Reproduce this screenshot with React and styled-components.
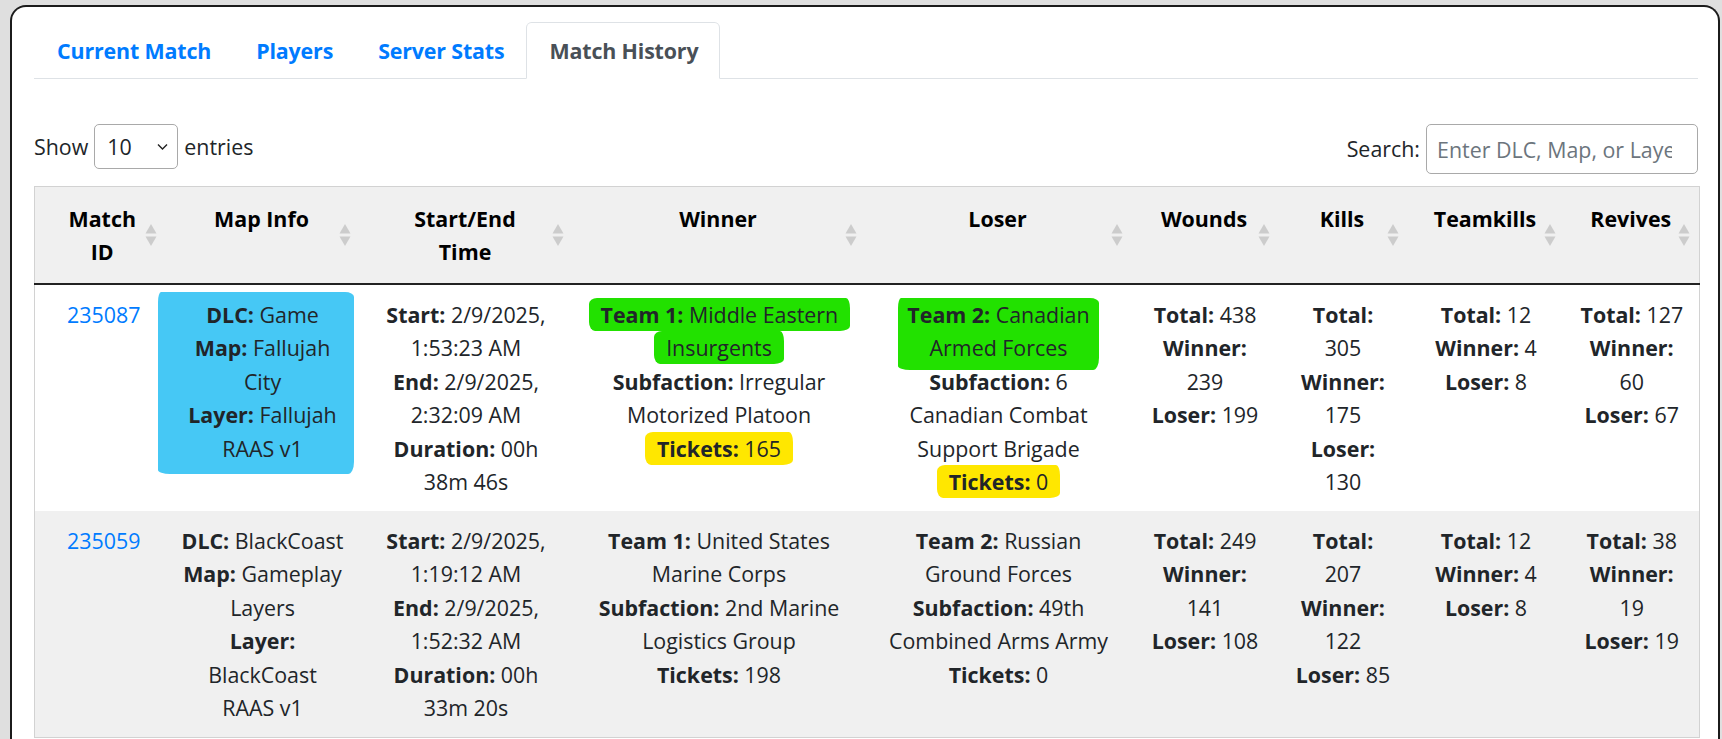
import React from 'react';
import styled, { createGlobalStyle, css } from 'styled-components';

const GlobalStyle = createGlobalStyle`
  * {
    box-sizing: border-box;
  }

  html,
  body {
    margin: 0;
    padding: 0;
    overflow: hidden;
    background: #dfdfdf;
  }

  body {
    font-family: 'Open Sans', 'Liberation Sans', sans-serif;
    font-size: 21.4px;
    line-height: 33.5px;
    color: #212529;
  }
`;

const Panel = styled.main`
  min-height: calc(100vh - 5px);
  margin: 5px 2px 0 10px;
  padding: 14.5px 20px 0 22px;
  background: #fff;
  border: 2px solid #1b1b1b;
  border-bottom: none;
  border-radius: 16px 16px 0 0;
`;

const TabList = styled.nav`
  display: flex;
  border-bottom: 1px solid #dee2e6;
`;

const Tab = styled.a`
  display: block;
  margin-bottom: -1px;
  padding: 11px 21px 11px 22px;
  border: 1px solid transparent;
  border-radius: 5.6px 5.6px 0 0;
  font-weight: 700;
  letter-spacing: -0.15px;
  color: #007bff;
  text-decoration: none;
  cursor: pointer;

  ${(props) =>
    props.$active &&
    css`
      color: #495057;
      background: #fff;
      border-color: #dee2e6 #dee2e6 #fff;
    `}
`;

const Toolbar = styled.div`
  display: flex;
  justify-content: space-between;
  align-items: flex-start;
  margin: 45px 0 12px;
  height: 50px;
`;

const LengthControl = styled.label`
  display: flex;
  align-items: center;
  gap: 6px;
  height: 45px;
`;

const SelectWrap = styled.span`
  position: relative;
  display: inline-flex;
`;

const Select = styled.select`
  appearance: none;
  width: 84px;
  height: 45px;
  padding: 0 30px 0 12px;
  font: inherit;
  color: #212529;
  background: #fff;
  border: 1px solid #a9a9a9;
  border-radius: 5px;
`;

const Chevron = styled.svg`
  position: absolute;
  right: 10px;
  top: 50%;
  transform: translateY(-50%);
  pointer-events: none;
`;

const SearchControl = styled.label`
  display: flex;
  align-items: center;
  gap: 6px;
  height: 50px;
`;

const SearchInput = styled.input`
  width: 272px;
  height: 50px;
  padding: 0 6px 0 10px;
  font: inherit;
  color: #212529;
  border: 1px solid #a9a9a9;
  border-radius: 5px;

  &::placeholder {
    color: #6c757d;
  }
`;

const Table = styled.table`
  width: 100%;
  table-layout: fixed;
  border-collapse: collapse;
  border: 1px solid #d2d2d2;
`;

const Th = styled.th`
  position: relative;
  width: ${(props) => props.$width}px;
  padding: 14.5px 22px 14.5px ${(props) => (props.$lead ? 26 : 20)}px;
  background: #f0f0f0;
  border-bottom: 2px solid #222;
  font-weight: 700;
  color: #000;
  text-align: center;
  vertical-align: top;
`;

const SortIcon = styled.svg`
  position: absolute;
  right: 9px;
  top: 50%;
  transform: translateY(-50%);
`;

const Row = styled.tr`
  background: ${(props) => (props.$striped ? '#f0f0f0' : '#fff')};
`;

const Td = styled.td`
  padding: 12.5px 16px 12.5px ${(props) => (props.$lead ? 23 : 16)}px;
  text-align: center;
  vertical-align: top;
  white-space: nowrap;
`;

const MatchLink = styled.a`
  color: #007bff;
  text-decoration: none;
`;

const Label = styled.b`
  font-weight: 700;
`;

const tones = {
  blue: '#46c8f5',
  green: '#22e100',
  yellow: '#ffe700',
};

// hand-drawn marker strokes over the cell text
const Marker = styled.span`
  background: ${(props) => tones[props.$tone]};

  ${(props) =>
    props.$spread
      ? css`
          display: inline-block;
          padding: ${props.$spread.map((v) => `${v}px`).join(' ')};
          margin: ${props.$spread.map((v) => `${-v}px`).join(' ')};
          border-radius: 3px 9px 6px 12px / 10px 5px 12px 4px;
        `
      : css`
          padding: 2px 12px;
          border-radius: 8px 4px 10px 6px / 6px 10px 5px 9px;
          -webkit-box-decoration-break: clone;
          box-decoration-break: clone;
        `}
`;

const columns = [
  { label: ['Match', 'ID'], width: 131 },
  { label: ['Map Info'], width: 194 },
  { label: ['Start/End', 'Time'], width: 213 },
  { label: ['Winner'], width: 293 },
  { label: ['Loser'], width: 266 },
  { label: ['Wounds'], width: 147 },
  { label: ['Kills'], width: 129 },
  { label: ['Teamkills'], width: 157 },
  { label: ['Revives'], width: 135 },
];

const matches = [
  {
    id: '235087',
    cells: [
      [
        {
          tone: 'blue',
          spread: [6, 17, 9, 30],
          lines: ['**DLC:** Game', '**Map:** Fallujah', 'City', '**Layer:** Fallujah', 'RAAS v1'],
        },
      ],
      ['**Start:** 2/9/2025,', '1:53:23 AM', '**End:** 2/9/2025,', '2:32:09 AM', '**Duration:** 00h', '38m 46s'],
      [
        { tone: 'green', lines: ['**Team 1:** Middle Eastern', 'Insurgents'] },
        { lines: ['**Subfaction:** Irregular', 'Motorized Platoon'] },
        { tone: 'yellow', lines: ['**Tickets:** 165'] },
      ],
      [
        { tone: 'green', spread: [0, 9, 5, 9], lines: ['**Team 2:** Canadian', 'Armed Forces'] },
        { lines: ['**Subfaction:** 6', 'Canadian Combat', 'Support Brigade'] },
        { tone: 'yellow', lines: ['**Tickets:** 0'] },
      ],
      ['**Total:** 438', '**Winner:**', '239', '**Loser:** 199'],
      ['**Total:**', '305', '**Winner:**', '175', '**Loser:**', '130'],
      ['**Total:** 12', '**Winner:** 4', '**Loser:** 8'],
      ['**Total:** 127', '**Winner:**', '60', '**Loser:** 67'],
    ],
  },
  {
    id: '235059',
    cells: [
      ['**DLC:** BlackCoast', '**Map:** Gameplay', 'Layers', '**Layer:**', 'BlackCoast', 'RAAS v1'],
      ['**Start:** 2/9/2025,', '1:19:12 AM', '**End:** 2/9/2025,', '1:52:32 AM', '**Duration:** 00h', '33m 20s'],
      ['**Team 1:** United States', 'Marine Corps', '**Subfaction:** 2nd Marine', 'Logistics Group', '**Tickets:** 198'],
      ['**Team 2:** Russian', 'Ground Forces', '**Subfaction:** 49th', 'Combined Arms Army', '**Tickets:** 0'],
      ['**Total:** 249', '**Winner:**', '141', '**Loser:** 108'],
      ['**Total:**', '207', '**Winner:**', '122', '**Loser:** 85'],
      ['**Total:** 12', '**Winner:** 4', '**Loser:** 8'],
      ['**Total:** 38', '**Winner:**', '19', '**Loser:** 19'],
    ],
  },
];

// "**Label:** value" -> bold label followed by plain text
const renderLine = (text) =>
  text.split('**').map((part, i) => (i % 2 ? <Label key={i}>{part}</Label> : part));

const withBreaks = (items, render) =>
  items.map((item, i) => (
    <React.Fragment key={i}>
      {i > 0 && <br />}
      {render(item)}
    </React.Fragment>
  ));

const toGroups = (cell) => (typeof cell[0] === 'string' ? [{ lines: cell }] : cell);

const CellContent = ({ cell }) =>
  withBreaks(toGroups(cell), (group) => {
    const body = withBreaks(group.lines, renderLine);
    return group.tone ? (
      <Marker $tone={group.tone} $spread={group.spread}>
        {body}
      </Marker>
    ) : (
      body
    );
  });

const SortArrows = () => (
  <SortIcon width="12" height="24" viewBox="0 0 12 24">
    <polygon points="6,1 11.5,10.5 0.5,10.5" fill="#000" fillOpacity="0.15" />
    <polygon points="0.5,13.5 11.5,13.5 6,23" fill="#000" fillOpacity="0.15" />
  </SortIcon>
);

const tabs = ['Current Match', 'Players', 'Server Stats', 'Match History'];

const App = () => (
  <>
    <GlobalStyle />
    <Panel>
      <TabList>
        {tabs.map((tab) => (
          <Tab key={tab} $active={tab === 'Match History'}>
            {tab}
          </Tab>
        ))}
      </TabList>

      <Toolbar>
        <LengthControl>
          Show
          <SelectWrap>
            <Select defaultValue="10">
              <option value="10">10</option>
              <option value="25">25</option>
              <option value="50">50</option>
              <option value="100">100</option>
            </Select>
            <Chevron width="11" height="7" viewBox="0 0 11 7">
              <path d="M1 1l4.5 4.5L10 1" fill="none" stroke="#222" strokeWidth="1.4" />
            </Chevron>
          </SelectWrap>
          entries
        </LengthControl>

        <SearchControl>
          Search:
          <SearchInput type="search" placeholder="Enter DLC, Map, or Layer" />
        </SearchControl>
      </Toolbar>

      <Table>
        <thead>
          <tr>
            {columns.map((col, i) => (
              <Th key={col.label.join(' ')} $width={col.width} $lead={i === 0}>
                {withBreaks(col.label, (line) => line)}
                <SortArrows />
              </Th>
            ))}
          </tr>
        </thead>
        <tbody>
          {matches.map((match, i) => (
            <Row key={match.id} $striped={i % 2 === 1}>
              <Td $lead>
                <MatchLink href="#">{match.id}</MatchLink>
              </Td>
              {match.cells.map((cell, ci) => (
                <Td key={ci}>
                  <CellContent cell={cell} />
                </Td>
              ))}
            </Row>
          ))}
        </tbody>
      </Table>
    </Panel>
  </>
);

export default App;
